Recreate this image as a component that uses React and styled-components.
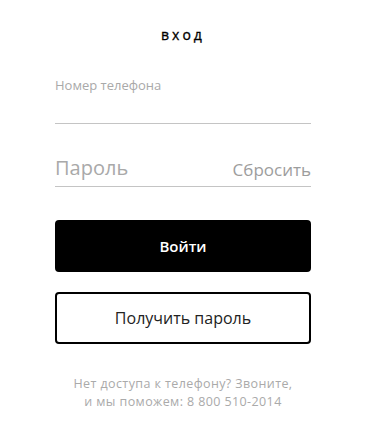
import React, { useState } from 'react'
import styled, { createGlobalStyle } from 'styled-components'

const Global = createGlobalStyle`
  html, body {
    margin: 0;
    padding: 0;
    background: #fff;
  }
  * {
    box-sizing: border-box;
  }
`

const Page = styled.div`
  width: 366px;
  height: 440px;
  display: flex;
  justify-content: center;
  font-family: "Open Sans", Lato, sans-serif;
  background: #fff;
`

const Form = styled.form`
  width: 256px;
  display: flex;
  flex-direction: column;
  padding-top: 26px;
`

const Title = styled.h1`
  margin: 0;
  font-size: 14px;
  font-weight: 400;
  letter-spacing: 3px;
  text-align: center;
  color: #000;
  line-height: 17px;
  -webkit-text-stroke: 0.3px #000;
`

const Field = styled.label`
  display: flex;
  align-items: flex-end;
  justify-content: space-between;
  border-bottom: 1px solid #c4c4c4;
  height: ${props => props.height}px;
  margin-top: ${props => props.top}px;
  padding-bottom: ${props => props.bottom}px;
`

const Input = styled.input`
  flex: 1;
  min-width: 0;
  border: none;
  outline: none;
  padding: 0;
  background: transparent;
  font-family: inherit;
  font-size: ${props => props.size}px;
  color: #222;
  &::placeholder {
    color: #a9a9a9;
  }
`

const Reset = styled.button`
  border: none;
  background: none;
  padding: 0;
  font-family: inherit;
  font-size: 17px;
  color: #9d9d9d;
  cursor: pointer;
  line-height: 22px;
`

const Button = styled.button`
  height: 52px;
  border-radius: 4px;
  font-family: inherit;
  cursor: pointer;
  margin-top: ${props => props.top}px;
  background: ${props => props.primary ? '#000' : '#fff'};
  color: ${props => props.primary ? '#fff' : '#222'};
  font-size: ${props => props.primary ? 15 : 16}px;
  font-weight: ${props => props.primary ? 600 : 400};
  border: 2px solid #000;
`

const Help = styled.p`
  margin: 31px 0 0;
  text-align: center;
  font-size: 12.5px;
  letter-spacing: 0.4px;
  line-height: 18px;
  color: #aaa;
`

export default function App() {
  const [phone, setPhone] = useState('')
  const [password, setPassword] = useState('')

  return (
    <Page>
      <Global />
      <Form onSubmit={e => e.preventDefault()}>
        <Title>вход</Title>
        <Field height={48} top={33} bottom={6}>
          <Input
            size={13}
            placeholder="Номер телефона"
            value={phone}
            onChange={e => setPhone(e.target.value)}
            style={{ alignSelf: 'flex-start' }}
          />
        </Field>
        <Field height={63} top={0} bottom={5}>
          <Input
            size={20}
            type="password"
            placeholder="Пароль"
            value={password}
            onChange={e => setPassword(e.target.value)}
          />
          <Reset type="button">Сбросить</Reset>
        </Field>
        <Button primary top={33}>Войти</Button>
        <Button type="button" top={20}>Получить пароль</Button>
        <Help>
          Нет доступа к телефону? Звоните,<br />
          и мы поможем: 8 800 510-2014
        </Help>
      </Form>
    </Page>
  )
}
